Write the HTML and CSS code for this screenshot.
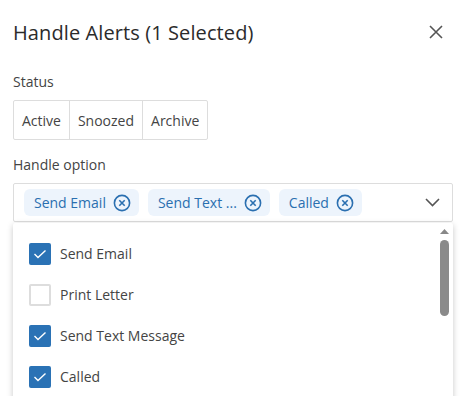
FILE: index.html
```html
<!DOCTYPE html>
<html>
<head>
<meta charset="utf-8">
<link rel="stylesheet" href="styles.css">
</head>
<body>
<div class="dialog">
  <div class="header">
    <h1 class="title">Handle Alerts (1 Selected)</h1>
    <svg class="close" width="14" height="14" viewBox="0 0 14 14"><path d="M1 1L13 13M13 1L1 13" stroke="#555" stroke-width="1.6" fill="none"/></svg>
  </div>
  <div class="label">Status</div>
  <div class="btn-group">
    <div class="btn">Active</div>
    <div class="btn">Snoozed</div>
    <div class="btn">Archive</div>
  </div>
  <div class="label label-2">Handle option</div>
  <div class="select">
    <div class="chips">
      <span class="chip">Send Email <svg class="chip-x" width="18" height="18" viewBox="0 0 18 18"><circle cx="9" cy="9" r="7.6" fill="none" stroke="#2a6fb0" stroke-width="1.6"/><path d="M6.3 6.3L11.7 11.7M11.7 6.3L6.3 11.7" stroke="#2a6fb0" stroke-width="1.6"/></svg></span>
      <span class="chip">Send Text ... <svg class="chip-x" width="18" height="18" viewBox="0 0 18 18"><circle cx="9" cy="9" r="7.6" fill="none" stroke="#2a6fb0" stroke-width="1.6"/><path d="M6.3 6.3L11.7 11.7M11.7 6.3L6.3 11.7" stroke="#2a6fb0" stroke-width="1.6"/></svg></span>
      <span class="chip">Called <svg class="chip-x" width="18" height="18" viewBox="0 0 18 18"><circle cx="9" cy="9" r="7.6" fill="none" stroke="#2a6fb0" stroke-width="1.6"/><path d="M6.3 6.3L11.7 11.7M11.7 6.3L6.3 11.7" stroke="#2a6fb0" stroke-width="1.6"/></svg></span>
    </div>
    <svg class="chevron" width="15" height="9" viewBox="0 0 15 9"><path d="M1 1L7.5 7.5L14 1" stroke="#555" stroke-width="1.6" fill="none"/></svg>
  </div>
  <div class="panel">
    <ul class="options">
      <li class="option"><span class="cb checked"><svg width="14" height="10" viewBox="0 0 14 10"><path d="M1.5 5L5 8.5L12.5 1.5" stroke="#fff" stroke-width="1.4" fill="none"/></svg></span>Send Email</li>
      <li class="option"><span class="cb"></span>Print Letter</li>
      <li class="option"><span class="cb checked"><svg width="14" height="10" viewBox="0 0 14 10"><path d="M1.5 5L5 8.5L12.5 1.5" stroke="#fff" stroke-width="1.4" fill="none"/></svg></span>Send Text Message</li>
      <li class="option"><span class="cb checked"><svg width="14" height="10" viewBox="0 0 14 10"><path d="M1.5 5L5 8.5L12.5 1.5" stroke="#fff" stroke-width="1.4" fill="none"/></svg></span>Called</li>
    </ul>
    <div class="scrollbar">
      <svg class="sb-arrow" width="9" height="5" viewBox="0 0 9 5"><path d="M0 5L4.5 0L9 5Z" fill="#888"/></svg>
      <div class="sb-thumb"></div>
    </div>
  </div>
</div>
</body>
</html>
```
FILE: styles.css
```css
* { box-sizing: border-box; }
html, body { margin: 0; padding: 0; background: #fff; overflow: hidden; }
body { font-family: "Open Sans", "Liberation Sans", sans-serif; color: #333; }
.dialog { padding: 17px 14px 0 13px; width: 467px; height: 396px; }
.header { display: flex; justify-content: space-between; align-items: center; height: 30px; }
.title { margin: 0; font-size: 20px; font-weight: 400; color: #2b2b2b; letter-spacing: 0.1px; }
.close { margin-right: 10px; }
.label { font-size: 14px; color: #444; margin-top: 25px; line-height: 20px; }
.label-2 { margin-top: 15px; }
.btn-group { display: inline-flex; border: 1px solid #ddd; border-radius: 2px; margin-top: 8px; height: 40px; }
.btn { font-size: 14px; color: #444; padding: 0 8px; display: flex; align-items: center; }
.btn + .btn { border-left: 1px solid #ddd; }
.select { margin-top: 8px; height: 39px; border: 1px solid #ddd; border-radius: 2px; display: flex; align-items: center; justify-content: space-between; padding: 0 12px 0 10px; }
.chips { display: flex; gap: 9px; }
.chip { display: inline-flex; align-items: center; gap: 7px; height: 27px; background: #edf4fc; color: #2a6fb0; border-radius: 6px; padding: 0 8px 0 10px; font-size: 14px; }
.chip-x { flex: none; }
.panel { margin-top: 1px; height: 180px; border-radius: 2px; box-shadow: 0 2px 6px rgba(0,0,0,0.22); display: flex; background: #fff; }
.options { list-style: none; margin: 0; padding: 10px 0 0 16px; flex: 1; }
.option { display: flex; align-items: center; height: 41px; font-size: 14px; color: #444; }
.cb { width: 22px; height: 22px; border: 2px solid #ddd; border-radius: 2px; margin-right: 9px; display: flex; align-items: center; justify-content: center; }
.cb.checked { background: #2a72b5; border-color: #2a72b5; }
.scrollbar { width: 15px; display: flex; flex-direction: column; align-items: center; padding-top: 6px; margin-right: 1px; }
.sb-arrow { margin-bottom: 6px; }
.sb-thumb { width: 9px; height: 76px; background: #8a8a8a; border-radius: 5px; }
```
